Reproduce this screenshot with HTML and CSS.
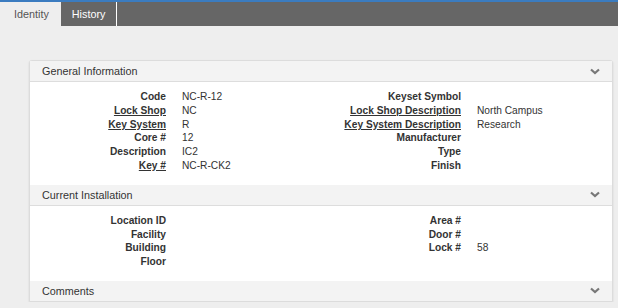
FILE: index.html
```html
<!DOCTYPE html>
<html lang="en">
    <head>
        <meta charset="UTF-8">
        <title>Key Core</title>
        <link rel="stylesheet" href="styles.css">
    </head>
    <body>
        <div class="tabbar">
            <a class="tab tab-active">Identity</a>
            <a class="tab">History</a>
        </div>
        <div class="page">
            <div class="panel">
                <div class="panel-head">
                    <span>General Information</span>
                    <svg class="chev" width="10" height="7" viewBox="0 0 10 7"><polyline points="1,1.5 5,5 9,1.5" fill="none" stroke="#777" stroke-width="2.2"/></svg>
                </div>
                <div class="panel-body">
                    <div class="fields">
                        <span class="lbl">Code</span><span class="val">NC-R-12</span>
                        <span class="lbl link">Lock Shop</span><span class="val">NC</span>
                        <span class="lbl link">Key System</span><span class="val">R</span>
                        <span class="lbl">Core #</span><span class="val">12</span>
                        <span class="lbl">Description</span><span class="val">IC2</span>
                        <span class="lbl link">Key #</span><span class="val">NC-R-CK2</span>
                    </div>
                    <div class="fields">
                        <span class="lbl">Keyset Symbol</span><span class="val"></span>
                        <span class="lbl link">Lock Shop Description</span><span class="val">North Campus</span>
                        <span class="lbl link">Key System Description</span><span class="val">Research</span>
                        <span class="lbl">Manufacturer</span><span class="val"></span>
                        <span class="lbl">Type</span><span class="val"></span>
                        <span class="lbl">Finish</span><span class="val"></span>
                    </div>
                </div>
                <div class="panel-head">
                    <span>Current Installation</span>
                    <svg class="chev" width="10" height="7" viewBox="0 0 10 7"><polyline points="1,1.5 5,5 9,1.5" fill="none" stroke="#777" stroke-width="2.2"/></svg>
                </div>
                <div class="panel-body body-install">
                    <div class="fields">
                        <span class="lbl">Location ID</span><span class="val"></span>
                        <span class="lbl">Facility</span><span class="val"></span>
                        <span class="lbl">Building</span><span class="val"></span>
                        <span class="lbl">Floor</span><span class="val"></span>
                    </div>
                    <div class="fields">
                        <span class="lbl">Area #</span><span class="val"></span>
                        <span class="lbl">Door #</span><span class="val"></span>
                        <span class="lbl">Lock #</span><span class="val">58</span>
                    </div>
                </div>
                <div class="panel-head head-last">
                    <span>Comments</span>
                    <svg class="chev" width="10" height="7" viewBox="0 0 10 7"><polyline points="1,1.5 5,5 9,1.5" fill="none" stroke="#777" stroke-width="2.2"/></svg>
                </div>
            </div>
        </div>
    </body>
</html>
```
FILE: styles.css
```css
*{
    margin: 0;
    padding: 0;
    box-sizing: border-box;
}
body{
    background-color: #eeeeee;
    font-family: "Liberation Sans", Arial, sans-serif;
    color: #333;
    font-size: 10.2px;
}
.tabbar{
    display: flex;
    height: 26px;
    background-color: #666666;
    border-top: 2px solid #3b7cc0;
}
.tab{
    display: block;
    font-size: 10.8px;
    line-height: 24px;
    color: #fff;
    padding: 0 11px 0 10px;
    border-right: 1px solid #fff;
}
.tab-active{
    background-color: #eeeeee;
    color: #555;
    padding: 0 12px 0 14px;
    border-right: 1px solid #666;
}
.page{
    padding: 34px 5px 0 29px;
}
.panel{
    background-color: #fff;
    border: 1px solid #dcdcdc;
    border-radius: 3px 3px 0 0;
    box-shadow: 0 1px 2px rgba(0,0,0,.12);
}
.panel-head{
    display: flex;
    justify-content: space-between;
    align-items: center;
    height: 21px;
    padding: 0 12px 0 12px;
    background-color: #f3f3f3;
    border-bottom: 1px solid #dddddd;
    font-size: 10.8px;
    color: #333;
}
.head-last{
    border-bottom: none;
    height: 20px;
}
.chev{
    display: block;
}
.panel-body{
    display: grid;
    grid-template-columns: 292px 1fr;
    align-items: start;
    padding: 8px 0 12px 0;
}
.body-install{
    padding: 8px 0 12px 0;
}
.fields{
    display: grid;
    grid-template-columns: 136px 1fr;
    align-content: start;
    column-gap: 16px;
    line-height: 13.8px;
}
.fields + .fields{
    grid-template-columns: 139px 1fr;
}
.lbl{
    text-align: right;
    font-weight: bold;
}
.link{
    text-decoration: underline;
}
.val{
    color: #333;
}
```
